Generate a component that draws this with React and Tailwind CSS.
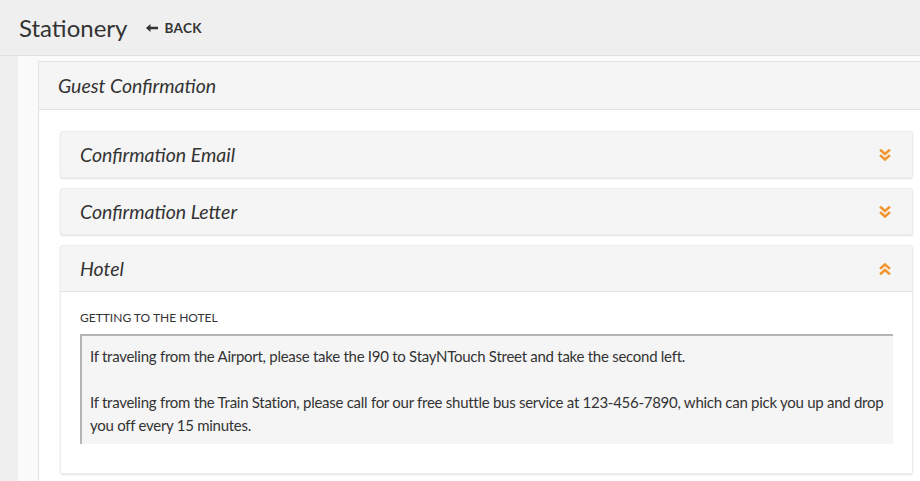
import { useState } from "react";

const ChevronsDown = () => (
  <svg width="14" height="14" viewBox="0 0 14 14" fill="none" stroke="#f0952f" strokeWidth="2.6" strokeLinecap="square">
    <path d="M3 2.5l4 3.5 4-3.5" />
    <path d="M3 8l4 3.5 4-3.5" />
  </svg>
);

const ChevronsUp = () => (
  <svg width="14" height="14" viewBox="0 0 14 14" fill="none" stroke="#f0952f" strokeWidth="2.6" strokeLinecap="square">
    <path d="M3 6l4-3.5 4 3.5" />
    <path d="M3 11.5l4-3.5 4 3.5" />
  </svg>
);

const Section = ({ title, open, onToggle, children }) => (
  <div className="rounded-[3px] bg-[#f5f5f5] shadow-[0_1px_2px_rgba(0,0,0,0.12)] border border-[#ececec]">
    <button
      type="button"
      onClick={onToggle}
      className="flex h-[45px] w-full items-center justify-between pl-[19px] pr-[20px] text-left"
    >
      <span className="text-[19.5px] italic text-[#333]">{title}</span>
      {open ? <ChevronsUp /> : <ChevronsDown />}
    </button>
    {open && <div className="border-t border-[#e3e3e3] bg-white px-[19px] pt-[17px] pb-[29px]">{children}</div>}
  </div>
);

const App = () => {
  const [open, setOpen] = useState("hotel");
  const toggle = (k) => setOpen((v) => (v === k ? null : k));

  return (
    <div className="min-h-screen bg-[#efefef] font-['Lato',sans-serif] text-[#333]">
      {/* ── Top bar ── */}
      <header className="flex h-[56px] items-center gap-[19px] border-b border-[#e2e2e2] pl-[19px]">
        <h1 className="text-[24px] text-[#333]">Stationery</h1>
        <button type="button" className="mt-[1px] flex items-center gap-[6px] text-[13.5px] font-bold tracking-wide text-[#333]">
          <svg width="12" height="10" viewBox="0 0 12 10" fill="#333">
            <path d="M0 5l4.5-4v2.8H12v2.4H4.5V9z" />
          </svg>
          BACK
        </button>
      </header>

      {/* ── Content ── */}
      <div className="ml-[18px] bg-[#fafafa] pl-[20px] pt-[5px]">
        <div className="border-l border-t border-[#e3e3e3] bg-white">
          <div className="flex h-[48px] items-center border-b border-[#e3e3e3] bg-[#f5f5f5] pl-[19px]">
            <h2 className="text-[19.5px] italic text-[#333]">Guest Confirmation</h2>
          </div>

          <div className="flex flex-col gap-[10px] pl-[21px] pr-[7px] pt-[21px] pb-[10px]">
            <Section title="Confirmation Email" open={open === "email"} onToggle={() => toggle("email")} />
            <Section title="Confirmation Letter" open={open === "letter"} onToggle={() => toggle("letter")} />
            <Section title="Hotel" open={open === "hotel"} onToggle={() => toggle("hotel")}>
              <label className="block text-[12px] uppercase text-[#333]">Getting to the hotel</label>
              <div className="mt-[7px] h-[110px] border-l-2 border-t-2 border-[#b5b5b5] bg-[#f5f5f5] px-[8px] pt-[9px] text-[15px] leading-[23px] tracking-[-0.27px] text-[#333]">
                <p>If traveling from the Airport, please take the I90 to StayNTouch Street and take the second left.</p>
                <p className="mt-[23px]">
                  If traveling from the Train Station, please call for our free shuttle bus service at 123-456-7890, which can pick you up and drop you off every 15 minutes.
                </p>
              </div>
            </Section>
          </div>
        </div>
      </div>
    </div>
  );
};

export default App;
